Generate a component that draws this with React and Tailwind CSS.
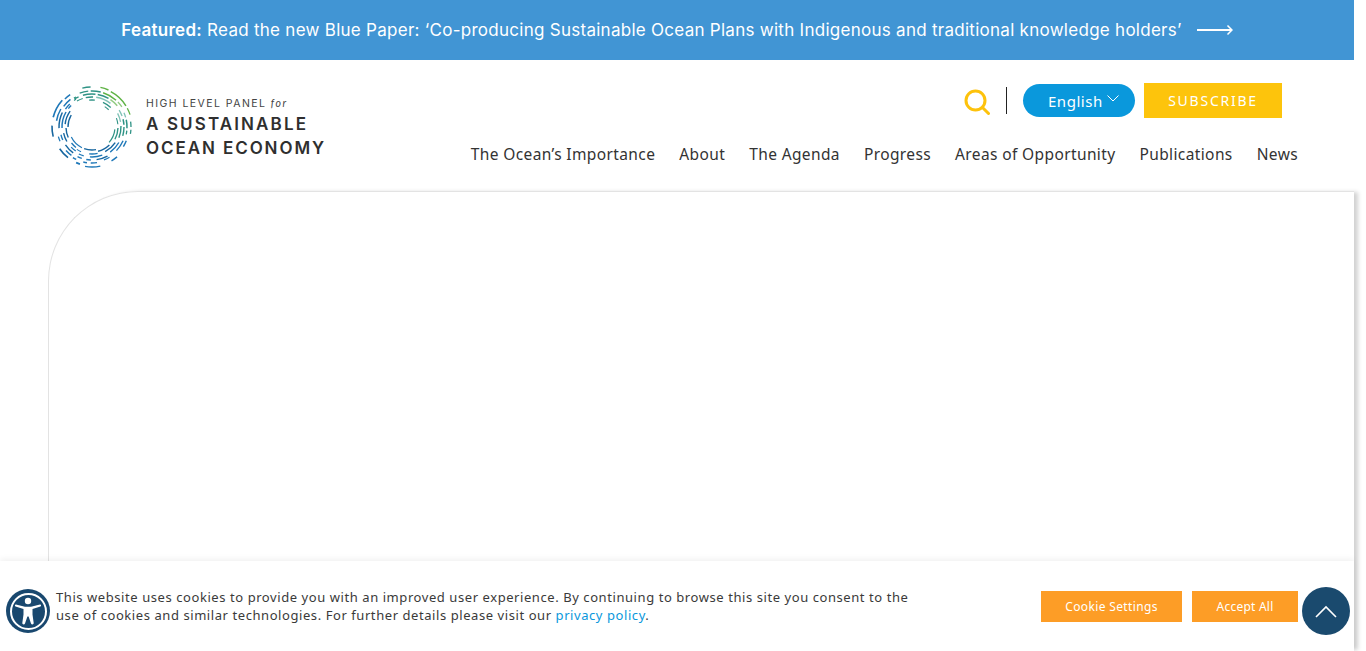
const C = { g: '#5fb345', lg: '#93cb83', t: '#2f9385', tl: '#7fc2b6', b: '#1f78b8', d: '#17669f', n: '#1b6a9c' };

// [radius, start deg, end deg, colour, stroke] - clockwise from 12 o'clock
const arcs = [
  [40, -14, -2, C.t, 1.4], [40.5, 12, 24, C.g, 1.4], [40, 28, 58, C.g, 1.5], [40, 62, 72, C.g, 1.3],
  [36, -20, -6, C.t, 1.3], [36, -2, 14, C.t, 1.5], [36, 18, 42, C.g, 1.4], [36, 46, 56, C.lg, 1.3],
  [33, -32, -24, C.t, 1.3], [33, -16, 6, C.t, 1.5], [33, 10, 30, C.t, 1.4], [33, 34, 50, C.lg, 1.5],
  [30, -30, -18, C.t, 1.1], [30, -12, 2, C.t, 1.4], [30, 8, 38, C.tl, 1.5],
  [27, -6, 6, C.t, 1.3], [27, 24, 44, C.t, 1.3], [24, 32, 44, C.t, 1.1],
  [39, 82, 90, C.t, 1.3], [39, 94, 100, C.t, 1.3], [35, 66, 74, C.tl, 1.3], [35, 78, 92, C.t, 1.5], [35, 96, 102, C.t, 1.3],
  [32, 58, 70, C.tl, 1.3], [32, 76, 86, C.t, 1.5], [32, 90, 106, C.t, 1.4], [29, 62, 80, C.tl, 1.3], [29, 88, 112, C.t, 1.4],
  [26, 70, 84, C.t, 1.1], [26, 92, 118, C.t, 1.4], [23, 96, 132, C.t, 1.2],
  [37, 112, 122, C.b, 1.4], [34, 114, 134, C.b, 1.4], [31, 120, 144, C.b, 1.4], [28, 124, 152, C.d, 1.4], [25, 136, 166, C.d, 1.4],
  [39, 140, 150, C.b, 1.4], [35, 150, 160, C.b, 1.3], [33, 152, 172, C.d, 1.4], [30, 160, 184, C.b, 1.3], [27, 168, 186, C.b, 1.3], [23, 170, 200, C.d, 1.3],
  [40, 168, 190, C.b, 1.4], [36, 172, 182, C.b, 1.3], [36, 188, 194, C.b, 1.5], [33, 182, 190, C.b, 1.5], [33, 198, 206, C.b, 1.5],
  [39, 198, 204, C.b, 1.7], [36, 206, 212, C.b, 1.5], [30, 196, 206, C.b, 1.3], [27, 204, 214, C.b, 1.1],
  [39, 218, 236, C.d, 1.6], [35, 216, 228, C.b, 1.4], [32, 216, 236, C.d, 1.4], [29, 214, 226, C.b, 1.3], [26, 218, 232, C.b, 1.3], [23, 206, 244, C.b, 1.2],
  [40, 256, 272, C.d, 1.6], [35, 246, 254, C.b, 1.3], [32, 246, 256, C.b, 1.3], [29, 240, 258, C.d, 1.4], [26, 246, 268, C.d, 1.4],
  [40, 284, 312, C.b, 1.7], [36, 280, 300, C.b, 1.5], [33, 268, 296, C.d, 1.5], [30, 268, 300, C.b, 1.5], [27, 276, 306, C.d, 1.4], [24, 270, 300, C.d, 1.4],
  [39, 316, 326, C.b, 1.5], [35, 306, 322, C.b, 1.5], [32, 304, 316, C.b, 1.4], [30, 308, 316, C.b, 1.3],
  [34, 328, 332, C.t, 1.3], [32, 326, 330, C.t, 1.3],
];

const arcPath = (r, a0, a1) => {
  const p = (a) => {
    const t = ((a - 90) * Math.PI) / 180;
    return `${(41 + r * Math.cos(t)).toFixed(2)} ${(41 + r * Math.sin(t)).toFixed(2)}`;
  };
  return `M${p(a0)}A${r} ${r} 0 0 1 ${p(a1)}`;
};

const nav = ['The Ocean’s Importance', 'About', 'The Agenda', 'Progress', 'Areas of Opportunity', 'Publications', 'News'];

const App = () => {
  return (
    <div className="relative flex h-[651px] w-[1354px] flex-col bg-white font-['Noto_Sans',sans-serif] text-[#2b2b2b]">
      {/* Banner */}
      <div className="flex h-[60px] shrink-0 items-center justify-center bg-[#4195d4] pt-[2px] font-['Inter',sans-serif] text-[17px] text-white">
        <span className="tracking-[0.016em]"><b className="font-semibold">Featured:</b> Read the new Blue Paper: ‘Co-producing Sustainable Ocean Plans with Indigenous and traditional knowledge holders’</span>
        <svg width="36" height="12" viewBox="0 0 36 12" fill="none" stroke="white" className="mb-[2px] ml-[15px]">
          <path d="M0 6H34" strokeWidth="2" />
          <path d="M30.500 1.500L35 6L30.500 10.500" strokeWidth="1.500" />
        </svg>
      </div>

      {/* Header */}
      <header className="flex h-[131px] shrink-0 justify-between">
        <div className="ml-[51px] mt-[26px] flex items-start">
          <svg width="82" height="82" viewBox="0 0 82 82" fill="none" className="shrink-0">
            {arcs.map(([r, a0, a1, c, w], i) => (
              <path key={i} d={arcPath(r, a0, a1)} stroke={c} strokeWidth={w} />
            ))}
          </svg>
          <div className="ml-[13px] mt-[10px] font-['Inter',sans-serif] text-[#2f2f2f]">
            <div className="text-[10.500px] leading-[14px] tracking-[0.138em] text-[#444]">HIGH LEVEL PANEL <i className="font-['Lato',sans-serif]">for</i></div>
            <div className="mt-[3px] text-[17px] font-semibold leading-[20px] tracking-[0.125em]">A SUSTAINABLE</div>
            <div className="mt-[4px] text-[17px] font-semibold leading-[20px] tracking-[0.113em]">OCEAN ECONOMY</div>
          </div>
        </div>
        <div className="mr-[56px] flex flex-col items-end">
          <div className="mr-[16px] mt-[23px] flex h-[35px] items-center">
            <svg width="26" height="26" viewBox="0 0 26 26" fill="none" stroke="#fdc20c" strokeWidth="3" className="mt-[2px]">
              <circle cx="11.500" cy="11.500" r="9.500" />
              <path d="M18.500 18.500L24.500 24.500" strokeLinecap="round" />
            </svg>
            <div className="ml-[16px] h-[27px] w-px bg-[#222]" />
            <button className="ml-[16px] flex h-[33px] w-[112px] items-center rounded-full bg-[#0a98dc] pl-[25px] pt-[2px] text-[15px] tracking-[0.035em] text-white">
              English
              <svg width="12" height="7" viewBox="0 0 12 7" fill="none" stroke="white" className="mb-[7px] ml-[4px]"><path d="M.5 .5L6 6L11.500 .5" /></svg>
            </button>
            <button className="ml-[9px] h-[35px] w-[138px] bg-[#fdc40c] text-[14px] tracking-[0.125em] text-white">SUBSCRIBE</button>
          </div>
          <nav className="mt-[24px] flex gap-[24px] text-[15.500px] leading-[24px] tracking-[0.38px] text-[#333]">
            {nav.map((n) => <a key={n}>{n}</a>)}
          </nav>
        </div>
      </header>

      {/* Empty content panel */}
      <main className="ml-[48px] flex-1 rounded-tl-[90px] border-l border-t border-[#e3e3e3] shadow-[5px_0_4px_-1px_rgba(0,0,0,0.18)]" />

      {/* Cookie bar */}
      <div className="absolute bottom-0 left-0 flex h-[90px] w-full items-center bg-white shadow-[0_-2px_6px_rgba(0,0,0,0.06)]">
        <p className="ml-[56px] w-[870px] text-[13px] leading-[18px] tracking-[0.57px] text-[#3a3a3a]">
          This website uses cookies to provide you with an improved user experience. By continuing to browse this site you consent to the use of cookies and similar technologies. For further details please visit our <span className="text-[#0a98dc]">privacy policy</span>.
        </p>
        <button className="ml-auto h-[31px] w-[141px] bg-[#fd9d26] pt-[2px] text-[12px] tracking-[0.03em] text-white">Cookie Settings</button>
        <button className="ml-[10px] mr-[56px] h-[31px] w-[106px] bg-[#fd9d26] pt-[2px] text-[12px] tracking-[0.02em] text-white">Accept All</button>
      </div>

      {/* Accessibility widget */}
      <div className="absolute left-[6px] top-[589px] flex h-[44px] w-[44px] items-center justify-center rounded-full bg-[#19486f]">
        <div className="flex h-[37px] w-[37px] items-center justify-center rounded-full border-2 border-white">
          <svg width="28" height="30" viewBox="0 0 28 30" fill="white">
            <circle cx="14" cy="5" r="3.200" />
            <path d="M2 8.600C1 8.300.4 9.900 1.500 10.400L9.500 13V18.500L8.300 27C8.200 28.600 10.500 29 11 27.400L13.400 20.500H14.600L17 27.400C17.500 29 19.800 28.600 19.700 27L18.500 18.500V13L26.500 10.400C27.600 9.900 27 8.300 26 8.600L17 10.800H11Z" />
          </svg>
        </div>
      </div>

      {/* Back to top */}
      <button className="absolute left-[1302px] top-[587px] flex h-[48px] w-[48px] items-center justify-center rounded-full bg-[#1a4a6e]">
        <svg width="22" height="13" viewBox="0 0 22 13" fill="none" stroke="white" strokeWidth="1.600"><path d="M1 12L11 2L21 12" /></svg>
      </button>
    </div>
  );
};

export default App;
